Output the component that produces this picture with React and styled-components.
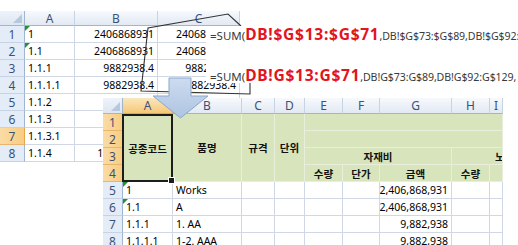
import React from 'react';
import styled, { createGlobalStyle, css } from 'styled-components';

const GlobalStyle = createGlobalStyle`
  html, body {
    margin: 0;
    padding: 0;
    background: #fff;
  }
  body {
    font-family: "Noto Sans", "Noto Sans CJK KR", sans-serif;
  }
`;

const Canvas = styled.div`
  position: relative;
  width: 518px;
  height: 245px;
  overflow: hidden;
  background: #fff;
`;

// each screenshot piece sits on the canvas like a window
const Sheet = styled.div`
  position: absolute;
  left: ${p => p.$x}px;
  top: ${p => p.$y}px;
  z-index: ${p => p.$z};
  display: grid;
  grid-template-columns: ${p => p.$cols};
  grid-template-rows: ${p => p.$rows};
  background: #fff;
  color: #000;
`;

const place = css`
  grid-column: ${p => (p.$c ? `${p.$c} / span ${p.$cs || 1}` : 'auto')};
  grid-row: ${p => (p.$r ? `${p.$r} / span ${p.$rs || 1}` : 'auto')};
`;

const Corner = styled.div`
  ${place}
  position: relative;
  background: linear-gradient(#eef3fa, #dde6f2);
  border-right: 1px solid #9eb6ce;
  border-bottom: 1px solid #9eb6ce;
  box-sizing: border-box;

  &::after {
    content: '';
    position: absolute;
    right: 2px;
    bottom: 2px;
    border-left: 9px solid transparent;
    border-bottom: 9px solid #b7c7dc;
  }
`;

const ColHead = styled.div`
  ${place}
  display: flex;
  align-items: center;
  justify-content: center;
  font-size: 12px;
  color: #3b5277;
  background: linear-gradient(#f7f9fd, #e2e9f3);
  border-right: 1px solid #c6d3e2;
  border-bottom: 1px solid #9eb6ce;
  box-sizing: border-box;

  ${p => p.$active && css`
    background: linear-gradient(#fbe6bd, #f6c877);
    border-bottom-color: #e9a34a;
    border-right-color: #e2b06c;
  `}
`;

const RowHead = styled.div`
  ${place}
  display: flex;
  align-items: center;
  justify-content: center;
  font-size: 12px;
  color: #3b5277;
  background: #e4ecf7;
  border-right: 1px solid #9eb6ce;
  border-bottom: 1px solid #c6d3e2;
  box-sizing: border-box;

  ${p => p.$active && css`
    background: linear-gradient(90deg, #fbdca6, #f7cd82);
    border-right-color: #e9a34a;
    border-bottom-color: #e6b56e;
  `}
`;

const Cell = styled.div`
  ${place}
  position: relative;
  display: flex;
  align-items: center;
  justify-content: ${p => (p.$align === 'right' ? 'flex-end' : p.$align === 'center' ? 'center' : 'flex-start')};
  padding: 0 3px;
  font-size: 10.5px;
  white-space: nowrap;
  overflow: hidden;
  border-right: 1px solid #d0d7e5;
  border-bottom: 1px solid #d0d7e5;
  box-sizing: border-box;

  ${p => p.$tri && css`
    &::before {
      content: '';
      position: absolute;
      left: 0;
      top: 0;
      border-top: 5px solid #23912f;
      border-right: 5px solid transparent;
    }
  `}
`;

const HeadCell = styled(Cell)`
  background: #d8e4bc;
  font-weight: 700;
  font-size: 10.5px;
  color: #111;
  border-right-color: #e8eedb;
  border-bottom-color: #e8eedb;
  padding-left: ${p => p.$indent || 3}px;
`;

const SelBox = styled(HeadCell)`
  overflow: visible;
  z-index: 2;
  border: 2px solid #1c1c1c;
  margin-left: -1px;

  &::after {
    content: '';
    position: absolute;
    right: -4px;
    bottom: -4px;
    width: 5px;
    height: 5px;
    background: #1c1c1c;
    border: 1px solid #fff;
  }
`;

const FormulaBox = styled.div`
  position: absolute;
  left: 206px;
  top: 26px;
  width: 312px;
  height: 57px;
  z-index: 3;
  background: #fff;
  display: flex;
  flex-direction: column;
  justify-content: space-between;
  padding-left: 4px;
  box-sizing: border-box;
`;

const FormulaLine = styled.div`
  height: 16px;
  line-height: 16px;
  white-space: nowrap;
  font-size: 11.5px;
  color: #3a3a3a;
`;

const RedRef = styled.span`
  font-size: 15.6px;
  font-weight: 700;
  letter-spacing: 0.7px;
  color: #e3141e;
`;

const Tail = styled.span`
  font-size: 10.6px;
  letter-spacing: -0.1px;
`;

const Overlay = styled.svg`
  position: absolute;
  left: 0;
  top: 0;
  z-index: ${p => p.$z};
  pointer-events: none;
`;

const backRows = [
  ['1', '2406868931', '2406868931', true],
  ['1.1', '2406868931', '2406868931', true],
  ['1.1.1', '9882938.4', '9882938.4'],
  ['1.1.1.1', '9882938.4', '9882938.4'],
  ['1.1.2', '4820510', '4820510'],
  ['1.1.3', '1330462.6', '1330462.6'],
  ['1.1.3.1', '1330462.6', '1330462.6'],
  ['1.1.4', '11672380.5', '11672380.5'],
];

const frontRows = [
  ['1', 'Works', '2,406,868,931', true],
  ['1.1', 'A', '2,406,868,931', true],
  ['1.1.1', '1. AA', '9,882,938'],
  ['1.1.1.1', '1-2. AAA', '9,882,938'],
];

const frontCols = ['A', 'B', 'C', 'D', 'E', 'F', 'G', 'H', 'I'];

function BackSheet() {
  return (
    <Sheet $x={0} $y={11} $z={1} $cols="25px 50px 83px 82px" $rows="15px repeat(8, 17px)">
      <Corner />
      <ColHead>A</ColHead>
      <ColHead>B</ColHead>
      <ColHead>C</ColHead>
      {backRows.map(([a, b, c, tri], i) => (
        <React.Fragment key={i}>
          <RowHead $active={i === 6}>{i + 1}</RowHead>
          <Cell $tri={tri}>{a}</Cell>
          <Cell $align="right">{b}</Cell>
          <Cell $align="right">{c}</Cell>
        </React.Fragment>
      ))}
    </Sheet>
  );
}

function FrontSheet() {
  return (
    <Sheet
      $x={103}
      $y={98}
      $z={4}
      $cols="20px 50px 69px 33px 30px 38px 37px 72px 38px 13px"
      $rows="16px repeat(8, 17px)"
    >
      <Corner $c={1} $r={1} />
      {frontCols.map((l, i) => (
        <ColHead key={l} $c={i + 2} $r={1} $active={l === 'A'}>{l}</ColHead>
      ))}
      {[1, 2, 3, 4, 5, 6, 7, 8].map(n => (
        <RowHead key={n} $c={1} $r={n + 1} $active={n <= 4}>{n}</RowHead>
      ))}

      <SelBox $c={2} $r={2} $rs={4} $align="center">공종코드</SelBox>
      <HeadCell $c={3} $r={2} $rs={4} $align="center">품명</HeadCell>
      <HeadCell $c={4} $r={2} $rs={4} $align="center">규격</HeadCell>
      <HeadCell $c={5} $r={2} $rs={4} $align="center">단위</HeadCell>
      <HeadCell $c={6} $r={2} $cs={5} />
      <HeadCell $c={6} $r={3} $cs={5} />
      <HeadCell $c={6} $r={4} $cs={3} $align="center">자재비</HeadCell>
      <HeadCell $c={9} $r={4} $cs={2} $indent={43}>노무비</HeadCell>
      <HeadCell $c={6} $r={5} $align="center">수량</HeadCell>
      <HeadCell $c={7} $r={5} $align="center">단가</HeadCell>
      <HeadCell $c={8} $r={5} $align="center">금액</HeadCell>
      <HeadCell $c={9} $r={5} $align="center">수량</HeadCell>
      <HeadCell $c={10} $r={5} />

      {frontRows.map(([code, name, amount, tri], i) => (
        <React.Fragment key={i}>
          <Cell $c={2} $r={i + 6} $tri={tri}>{code}</Cell>
          <Cell $c={3} $r={i + 6}>{name}</Cell>
          <Cell $c={4} $r={i + 6} />
          <Cell $c={5} $r={i + 6} />
          <Cell $c={6} $r={i + 6} />
          <Cell $c={7} $r={i + 6} />
          <Cell $c={8} $r={i + 6} $align="right">{amount}</Cell>
          <Cell $c={9} $r={i + 6} />
          <Cell $c={10} $r={i + 6} />
        </React.Fragment>
      ))}
    </Sheet>
  );
}

export default function App() {
  return (
    <>
      <GlobalStyle />
      <Canvas>
        <BackSheet />

        <Overlay $z={2} width="518" height="245" viewBox="0 0 518 245">
          <polyline
            points="250,80 250,94 141,91 148,28 228,14 241,26"
            fill="none"
            stroke="#333"
            strokeWidth="1.1"
          />
        </Overlay>

        <FormulaBox>
          <FormulaLine>
            =SUM(<RedRef>DB!$G$13:$G$71</RedRef><Tail>,DB!$G$73:$G$89,DB!$G$92:</Tail>
          </FormulaLine>
          <FormulaLine>
            =SUM(<RedRef>DB!G$13:G$71</RedRef><Tail>,DB!G$73:G$89,DB!G$92:G$129,</Tail>
          </FormulaLine>
        </FormulaBox>

        <FrontSheet />

        <Overlay $z={6} width="518" height="245" viewBox="0 0 518 245">
          <defs>
            <linearGradient id="arrowFill" x1="0" y1="0" x2="0" y2="1">
              <stop offset="0" stopColor="#cddcef" />
              <stop offset="1" stopColor="#aec4e1" />
            </linearGradient>
          </defs>
          <polygon
            points="169,78 191,78 191,96 208,96 180.5,118 153,96 169,96"
            fill="url(#arrowFill)"
            stroke="#8ba7cb"
            strokeWidth="1"
          />
        </Overlay>
      </Canvas>
    </>
  );
}
